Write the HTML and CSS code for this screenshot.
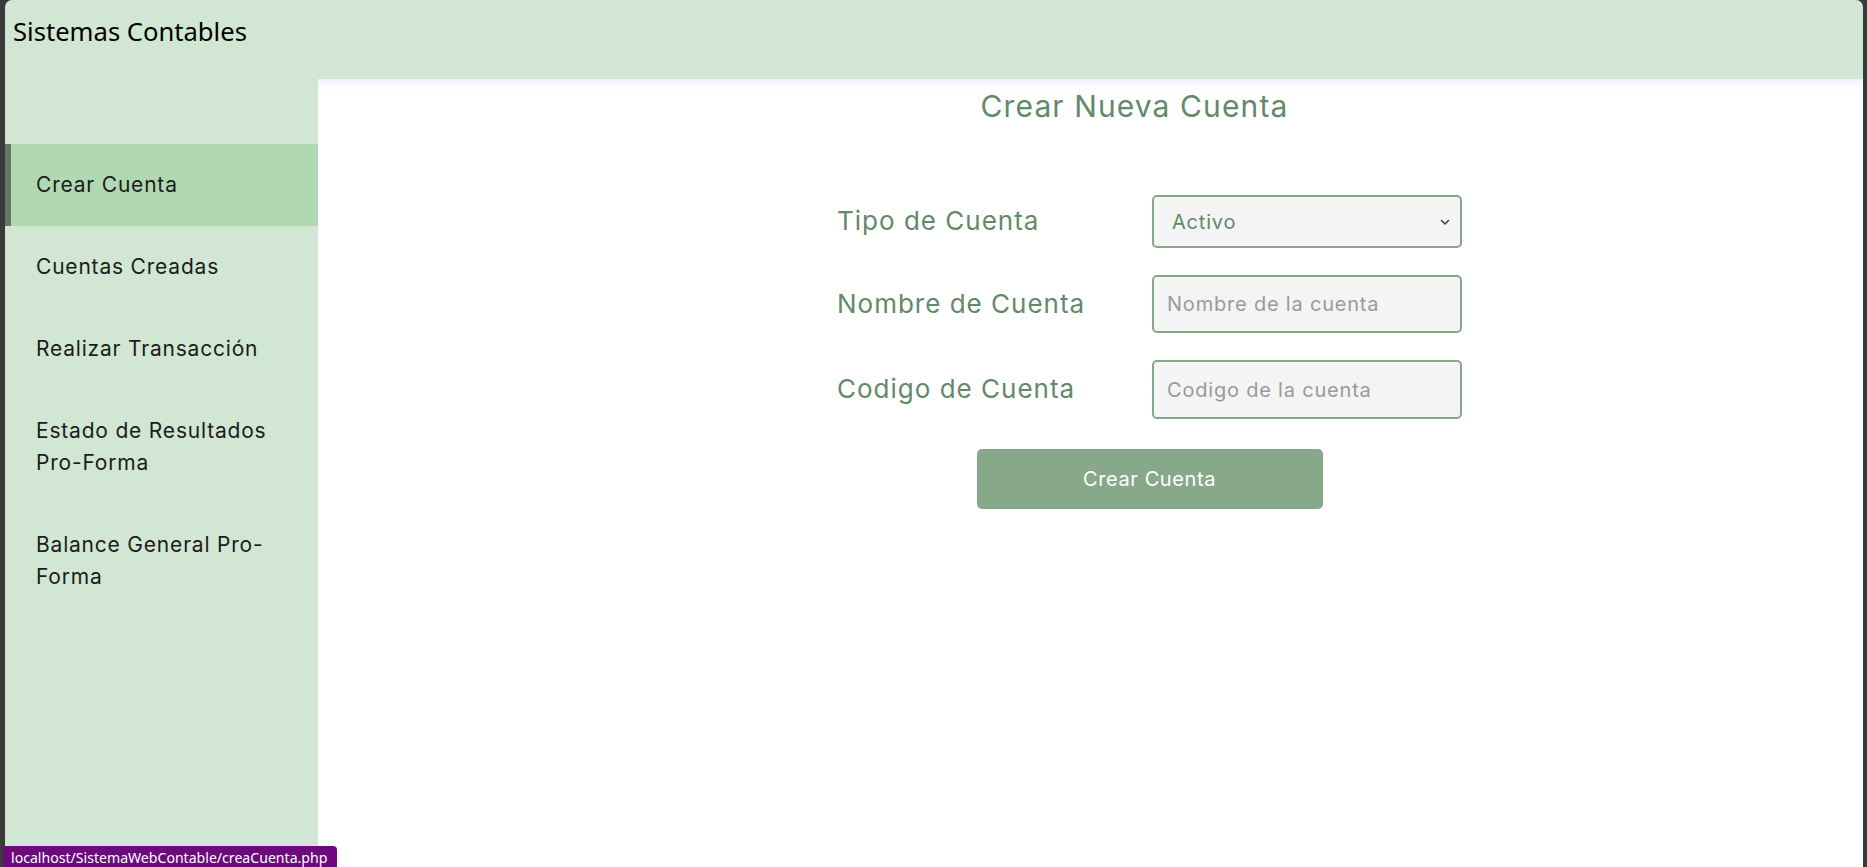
FILE: index.html
```html
<!DOCTYPE html>
<html lang="es">
<head>
<meta charset="utf-8">
<title>Sistemas Contables</title>
<link rel="stylesheet" href="styles.css">
</head>
<body>
<div class="app">
  <header class="header">
    <h1 class="brand">Sistemas Contables</h1>
  </header>
  <nav class="sidebar">
    <a class="nav-item active" href="#">Crear Cuenta</a>
    <a class="nav-item" href="#">Cuentas Creadas</a>
    <a class="nav-item" href="#">Realizar Transacción</a>
    <a class="nav-item" href="#">Estado de Resultados Pro-Forma</a>
    <a class="nav-item" href="#">Balance General Pro-Forma</a>
  </nav>
  <main class="main">
    <h2 class="title">Crear Nueva Cuenta</h2>
    <form class="form">
      <label class="label" for="tipo">Tipo de Cuenta</label>
      <div class="select-wrap">
        <select id="tipo" class="field select">
          <option>Activo</option>
          <option>Pasivo</option>
          <option>Capital</option>
        </select>
        <svg class="chevron" width="10" height="7" viewBox="0 0 10 7"><path d="M1.5 1.5 L5 5 L8.5 1.5" fill="none" stroke="#444" stroke-width="1.6" stroke-linecap="round" stroke-linejoin="round"/></svg>
      </div>
      <label class="label" for="nombre">Nombre de Cuenta</label>
      <input id="nombre" class="field input" type="text" placeholder="Nombre de la cuenta">
      <label class="label" for="codigo">Codigo de Cuenta</label>
      <input id="codigo" class="field input" type="text" placeholder="Codigo de la cuenta">
      <button type="button" class="btn">Crear Cuenta</button>
    </form>
  </main>
</div>
<div class="status">localhost/SistemaWebContable/creaCuenta.php</div>
</body>
</html>
```
FILE: styles.css
```css
html, body {
  margin: 0;
  padding: 0;
  height: 100%;
}
body {
  background: #3a3a3a;
  overflow: hidden;
  font-family: Inter, "Open Sans", sans-serif;
}
.app {
  margin: 0 4px 0 5px;
  height: 867px;
  display: grid;
  grid-template-columns: 313px 1fr;
  grid-template-rows: 79px 1fr;
  background: #d1e7d3;
  border-radius: 7px 7px 0 0;
  overflow: hidden;
}
.header {
  grid-column: 1 / -1;
  padding-left: 8px;
}
.brand {
  margin: 0;
  padding-top: 13px;
  font-family: "Noto Sans", "Open Sans", sans-serif;
  font-weight: 400;
  font-size: 25.6px;
  line-height: 38px;
  color: #000;
}
.sidebar {
  padding-top: 65px;
  display: flex;
  flex-direction: column;
}
.nav-item {
  display: block;
  padding: 25px 34px 25px 25px;
  border-left: 6px solid transparent;
  font-size: 21px;
  letter-spacing: 0.8px;
  line-height: 32px;
  color: #1c1c1c;
  text-decoration: none;
}
.nav-item.active {
  background: #b0d9b1;
  border-left-color: #5e7a63;
}
.main {
  background: #fff;
  box-shadow: inset 0 9px 9px -5px rgba(110, 125, 235, 0.14);
  display: flex;
  flex-direction: column;
  align-items: center;
  padding: 7px 0 0 88px;
}
.title {
  margin: 0;
  font-weight: 400;
  font-size: 30px;
  letter-spacing: 1.1px;
  line-height: 40px;
  color: #62896a;
}
.form {
  margin: 69px 0 0 30px;
  display: grid;
  grid-template-columns: 315px 310px;
  grid-template-rows: 53px 58px 59px 60px;
  row-gap: 27px;
  align-items: center;
}
.form .btn {
  margin-top: 5px;
}
.label {
  font-size: 26px;
  letter-spacing: 1px;
  color: #62896a;
  padding-bottom: 2px;
  white-space: nowrap;
}
.select-wrap {
  position: relative;
  height: 100%;
}
.field {
  box-sizing: border-box;
  width: 310px;
  height: 100%;
  margin: 0;
  border: 2px solid #86a889;
  border-radius: 5px;
  background: #f4f4f4;
  font-family: Inter, "Open Sans", sans-serif;
  font-size: 20px;
  letter-spacing: 0.8px;
  outline: none;
}
.select {
  appearance: none;
  -webkit-appearance: none;
  padding: 0 0 0 18px;
  color: #5f8a68;
}
.chevron {
  position: absolute;
  right: 12px;
  top: 24px;
}
.input {
  padding: 0 0 0 13px;
  color: #555;
}
.input::placeholder {
  color: #9a9a9a;
}
.btn {
  grid-column: 1 / -1;
  justify-self: center;
  width: 346px;
  height: 60px;
  border: none;
  border-radius: 5px;
  background: #88a88a;
  color: #fff;
  font-family: Inter, "Open Sans", sans-serif;
  font-size: 20px;
  letter-spacing: 0.6px;
}
.status {
  position: absolute;
  left: 3px;
  bottom: 0;
  height: 21px;
  padding: 0 10px 0 8px;
  background: #6c0a7d;
  color: #fff;
  border-radius: 0 4px 0 0;
  font-family: "Noto Sans", "Open Sans", sans-serif;
  font-size: 14.1px;
  line-height: 23px;
  white-space: nowrap;
}
```
